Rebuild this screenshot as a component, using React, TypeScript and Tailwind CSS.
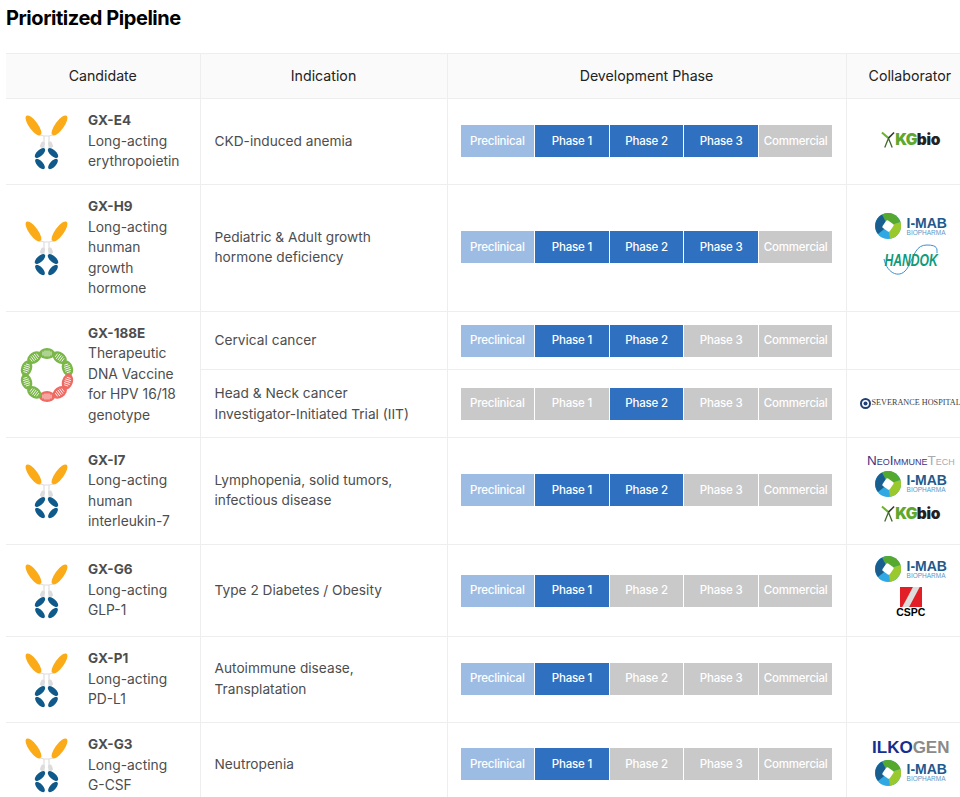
const font = { fontFamily: "Inter" };

type Cell = "pre" | "on" | "off";

const names = ["Preclinical", "Phase 1", "Phase 2", "Phase 3", "Commercial"];

function PhaseBar({ reached, preOff, lift }: { reached: number; preOff?: boolean; lift?: string }) {
  return (
    <div className={"flex w-[372px] h-8 " + (lift ?? "")}>
      {names.map((name, i) => {
        let kind: Cell = i === 0 ? "pre" : i <= reached ? "on" : "off";
        if (preOff && i !== reached) kind = "off";
        return (
          <div
            key={name}
            className={
              "flex-1 flex items-center justify-center text-[11.5px] font-medium tracking-[-0.2px] text-white border-r border-white last:border-r-0 " +
              (kind === "pre" ? "bg-[#9dbce3]" : kind === "on" ? "bg-[#2f71c0]" : "bg-[#c9c9c9]")
            }
          >
            {name}
          </div>
        );
      })}
    </div>
  );
}

function Antibody() {
  return (
    <svg width="54" height="60" viewBox="0 0 54 60" className="block mx-auto">
      <ellipse cx="13.5" cy="13.5" rx="4.4" ry="12" transform="rotate(-36 13.5 13.5)" fill="#fbab18" />
      <ellipse cx="39.5" cy="13.5" rx="4.4" ry="12" transform="rotate(36 39.5 13.5)" fill="#fbab18" />
      <path d="M20 23l4 1h5l4-1M24 24v12M29 24v12" stroke="#dedede" strokeWidth="1.2" fill="none" />
      <path d="M23 31.5l-1 2.5M30 31.5l1 2.5" stroke="#dcdcdc" strokeWidth="4" fill="none" strokeLinecap="round" />
      <ellipse cx="20" cy="41" rx="3" ry="6.5" transform="rotate(48 20 41)" fill="#0f5a8a" />
      <ellipse cx="33" cy="41" rx="3" ry="6.5" transform="rotate(-48 33 41)" fill="#0f5a8a" />
      <ellipse cx="20" cy="52" rx="3" ry="6.5" transform="rotate(-42 20 52)" fill="#0f5a8a" />
      <ellipse cx="33" cy="52" rx="3" ry="6.5" transform="rotate(42 33 52)" fill="#0f5a8a" />
    </svg>
  );
}

function DnaRing() {
  const lobes = Array.from({ length: 10 }, (_, i) => i);
  return (
    <svg width="56" height="56" viewBox="-28 -28 56 56" className="block mx-auto">
      {lobes.map((i) => {
        const red = i >= 3 && i <= 5;
        return (
          <g key={i} transform={`rotate(${i * 36}) translate(0 -21.5)`}>
            <ellipse rx="8" ry="5.4" fill={red ? "#ee6a62" : "#7ab648"} />
            <path d="M-4 -2v4M-2 -3v6M0 -3v6M2 -3v6M4 -2v4" stroke="#fff" strokeWidth="0.8" />
          </g>
        );
      })}
    </svg>
  );
}

function KGbio() {
  return (
    <div className="flex items-center justify-center">
      <svg width="14" height="18" viewBox="0 0 15 18">
        <path d="M8 7L4 17M8 7l4 10" stroke="#3f6b2a" strokeWidth="1.4" />
        <path d="M1 1l7 6" stroke="#6cb52d" strokeWidth="2.2" />
        <path d="M14 1L8 7" stroke="#333" strokeWidth="1.6" />
      </svg>
      <span className="text-[15.5px] font-black leading-none text-[#5da82d] tracking-[-0.6px]">KG</span>
      <span className="text-[15.5px] font-black leading-none text-[#222] tracking-[-0.3px]">bio</span>
    </div>
  );
}

function IMab() {
  return (
    <div className="flex items-center justify-center gap-1.5">
      <svg width="26" height="26" viewBox="0 0 26 26">
        <circle cx="13" cy="13" r="13" fill="#2fa8e4" />
        <path d="M13 13L7 1.5A13 13 0 0 1 25.5 9z" fill="#55a92f" />
        <path d="M13 13L25.5 9A13 13 0 0 1 15 25.8z" fill="#9ac92e" />
        <path d="M13 13L7 1.5A13 13 0 0 0 3 21z" fill="#185f90" />
        <rect x="8.5" y="8.5" width="9" height="9" rx="1.5" transform="rotate(35 13 13)" fill="#fff" />
      </svg>
      <div className="flex flex-col" style={{ fontFamily: "Liberation Sans" }}>
        <span className="text-[14px] font-bold leading-[12px] text-[#1d5a8e]">I-MAB</span>
        <span className="text-[6.5px] leading-[7px] text-[#5b9ac8]">BIOPHARMA</span>
      </div>
    </div>
  );
}

function Handok() {
  return (
    <div className="relative h-[33px] flex items-center justify-center">
      <svg width="56" height="34" viewBox="0 0 56 34" className="absolute">
        <path d="M1 15C4 30 18 36 25 23S33 1 44 1S54 5 54 9" fill="none" stroke="#3d8fd0" strokeWidth="1" />
      </svg>
      <span
        className="relative text-[16px] font-bold italic leading-none text-[#109a7a] scale-x-[0.76]"
        style={{ fontFamily: "Liberation Sans" }}
      >
        HANDOK
      </span>
    </div>
  );
}

function Cspc() {
  return (
    <div className="flex flex-col items-center">
      <div className="w-[22px] h-[20px] bg-[#e21f26] flex items-center justify-center overflow-hidden">
        <div className="w-[6px] h-[26px] bg-[#ddd] rotate-[28deg]" />
      </div>
      <span className="text-[10.5px] font-bold leading-[11px] text-black" style={{ fontFamily: "Liberation Sans" }}>
        CSPC
      </span>
    </div>
  );
}

function Severance() {
  return (
    <div className="flex items-center gap-[1px] whitespace-nowrap">
      <svg width="11" height="11" viewBox="0 0 11 11" className="shrink-0">
        <circle cx="5.5" cy="5.5" r="4.5" fill="#fff" stroke="#1f3f76" strokeWidth="2" />
        <circle cx="5.5" cy="5.5" r="2" fill="#1f3f76" />
      </svg>
      <span className="text-[8.2px] leading-none text-[#3b3b3b]" style={{ fontFamily: "Liberation Serif" }}>
        SEVERANCE HOSPITAL
      </span>
    </div>
  );
}

function NeoImmune() {
  return (
    <div
      className="text-[13.5px] leading-[12px] whitespace-nowrap text-center [font-variant:small-caps]"
      style={{ fontFamily: "Liberation Sans" }}
    >
      <span className="text-[#3b3480]">NeoImmune</span>
      <span className="text-[#a9aab0]">Tech</span>
    </div>
  );
}

function Ilkogen() {
  return (
    <div className="text-[17px] font-black leading-[15px] text-center" style={{ fontFamily: "Liberation Sans" }}>
      <span className="text-[#142f8f]">ILKO</span>
      <span className="text-[#8a8a8a]">GEN</span>
    </div>
  );
}

function Candidate({ name, lines }: { name: string; lines: string[] }) {
  return (
    <div className="text-[#4d4d4d] pb-[1px]">
      <div className="font-bold text-[13.5px]">{name}</div>
      {lines.map((l) => (
        <div key={l}>{l}</div>
      ))}
    </div>
  );
}

const tdBase = "border-t border-l border-[#eee] align-middle";
const indication = tdBase + " px-[14px] text-[#4d4d4d] text-[13.7px]";
const phase = tdBase + " pl-[13px]";
const collab = tdBase + " pl-[13px] pr-[24px]";

export default function App() {
  return (
    <div className="w-[960px] h-[797px] overflow-hidden bg-white pl-[6px]" style={font}>
      <h1 className="text-[20px] font-bold leading-[36px] text-black tracking-[-0.45px]">Prioritized Pipeline</h1>
      <table className="mt-[17px] border-collapse table-fixed w-[980px] text-[13.8px] leading-[20.4px]">
        <colgroup>
          <col className="w-[82px]" />
          <col className="w-[112px]" />
          <col className="w-[247px]" />
          <col className="w-[399px]" />
          <col className="w-[140px]" />
        </colgroup>
        <thead>
          <tr className="h-[45px] bg-[#fafafa] text-[#222] text-[14.2px]">
            <th colSpan={2} className="border-t border-[#eee] font-normal">Candidate</th>
            <th className="border-t border-l border-[#eee] font-normal">Indication</th>
            <th className="border-t border-l border-[#eee] font-normal">Development Phase</th>
            <th className="border-t border-l border-[#eee] font-normal text-left pl-[22px]">Collaborator</th>
          </tr>
        </thead>
        <tbody>
          <tr className="h-[86px]">
            <td className="border-t border-[#eee]"><Antibody /></td>
            <td className="border-t border-[#eee]"><Candidate name="GX-E4" lines={["Long-acting", "erythropoietin"]} /></td>
            <td className={indication}>CKD-induced anemia</td>
            <td className={phase}><PhaseBar reached={3} lift="mb-[1px]" /></td>
            <td className={collab}><div className="pb-[3px]"><KGbio /></div></td>
          </tr>
          <tr className="h-[127px]">
            <td className="border-t border-[#eee]"><Antibody /></td>
            <td className="border-t border-[#eee]"><Candidate name="GX-H9" lines={["Long-acting", "hunman", "growth", "hormone"]} /></td>
            <td className={indication + " pb-[2px]"}>Pediatric &amp; Adult growth<br />hormone deficiency</td>
            <td className={phase}><PhaseBar reached={3} lift="mb-[2px]" /></td>
            <td className={collab}>
              <div className="flex flex-col gap-[5px] pb-[6px]"><IMab /><Handok /></div>
            </td>
          </tr>
          <tr className="h-[58px]">
            <td rowSpan={2} className="border-t border-[#eee]"><DnaRing /></td>
            <td rowSpan={2} className="border-t border-[#eee]"><Candidate name="GX-188E" lines={["Therapeutic", "DNA Vaccine", "for HPV 16/18", "genotype"]} /></td>
            <td className={indication}>Cervical cancer</td>
            <td className={phase}><PhaseBar reached={2} /></td>
            <td className={tdBase}></td>
          </tr>
          <tr className="h-[68px]">
            <td className={indication}>Head &amp; Neck cancer<br />Investigator-Initiated Trial (IIT)</td>
            <td className={phase}><PhaseBar reached={2} preOff /></td>
            <td className={tdBase + " pl-[13px]"}><Severance /></td>
          </tr>
          <tr className="h-[107px]">
            <td className="border-t border-[#eee]"><Antibody /></td>
            <td className="border-t border-[#eee]"><Candidate name="GX-I7" lines={["Long-acting", "human", "interleukin-7"]} /></td>
            <td className={indication + " pb-[2px]"}>Lymphopenia, solid tumors,<br />infectious disease</td>
            <td className={phase}><PhaseBar reached={2} lift="mb-[2px]" /></td>
            <td className={collab}>
              <div className="flex flex-col pb-[5px]">
                <NeoImmune />
                <div className="mt-[4px]"><IMab /></div>
                <div className="mt-[8px]"><KGbio /></div>
              </div>
            </td>
          </tr>
          <tr className="h-[92px]">
            <td className="border-t border-[#eee]"><Antibody /></td>
            <td className="border-t border-[#eee]"><Candidate name="GX-G6" lines={["Long-acting", "GLP-1"]} /></td>
            <td className={indication}>Type 2 Diabetes / Obesity</td>
            <td className={phase}><PhaseBar reached={1} /></td>
            <td className={collab}>
              <div className="flex flex-col gap-[5px] pb-[7px]"><IMab /><Cspc /></div>
            </td>
          </tr>
          <tr className="h-[86px]">
            <td className="border-t border-[#eee]"><Antibody /></td>
            <td className="border-t border-[#eee]"><Candidate name="GX-P1" lines={["Long-acting", "PD-L1"]} /></td>
            <td className={indication + " pb-[2px]"}>Autoimmune disease,<br />Transplatation</td>
            <td className={phase}><PhaseBar reached={1} lift="mb-[2px]" /></td>
            <td className={tdBase}></td>
          </tr>
          <tr className="h-[85px]">
            <td className="border-t border-[#eee]"><Antibody /></td>
            <td className="border-t border-[#eee]"><Candidate name="GX-G3" lines={["Long-acting", "G-CSF"]} /></td>
            <td className={indication + " pb-[2px]"}>Neutropenia</td>
            <td className={phase}><PhaseBar reached={1} lift="mb-[2px]" /></td>
            <td className={collab}>
              <div className="flex flex-col gap-[5px] pb-[5px]"><Ilkogen /><IMab /></div>
            </td>
          </tr>
        </tbody>
      </table>
    </div>
  );
}
